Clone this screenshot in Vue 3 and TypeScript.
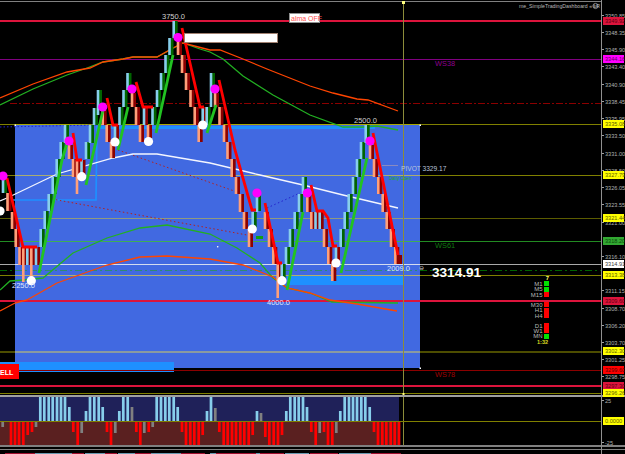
<script setup lang="ts">
type Bar = [number, number, number, string]

const W = 625
const H = 454
const BLOCK = { x: 15, y: 125, w: 405, h: 243 }

const hLines = [
  { y: 21, c: '#dc143c', w: 2, over: '#dc143c' },
  { y: 59.5, c: '#800080', w: 1, over: '#800080' },
  { y: 124.5, c: '#808000', w: 1, over: '#a8a800' },
  { y: 175.5, c: '#808000', w: 1, over: '#a9ad72' },
  { y: 218.5, c: '#5c5c00', w: 1.5, over: '#8f9a80' },
  { y: 241.5, c: '#228b22', w: 1, over: '#3fae55' },
  { y: 264.5, c: '#a9a9a9', w: 1, over: '#d4dcf0' },
  { y: 275.5, c: '#808000', w: 1, over: '#b0b070' },
  { y: 301, c: '#dc143c', w: 2, over: '#dc143c' },
  { y: 352, c: '#4d4d00', w: 2, over: '#8a9aa0' },
  { y: 370.5, c: '#8b0000', w: 1, over: '#8b0000' },
  { y: 386, c: '#dc143c', w: 2, over: '#dc143c' },
  { y: 393.5, c: '#808000', w: 1, over: '#808000' },
]

const bars: Bar[] = [
  [3, 178, 193, 'u'], [7.5, 193, 211, 'd'], [12, 212, 229, 'd'], [15.7, 229, 247, 'd'], [19.5, 247, 265, 'd'],
  [23.3, 247, 282, 'd'], [27.3, 247, 265, 'ur'], [31.3, 247, 282, 'd'], [36, 247, 265, 'ur'],
  [40.7, 229, 247, 'u'], [44.7, 211, 229, 'u'], [48.7, 194, 211, 'u'], [52.7, 177, 194, 'u'], [56.7, 159, 177, 'u'],
  [60.7, 142, 159, 'u'], [65, 125, 143, 'u'], [69, 145, 159, 'd'], [73, 159, 177, 'd'], [77, 160, 194, 'd'],
  [81.5, 160, 177, 'ur'], [86, 142, 159, 'u'], [90, 125, 143, 'u'], [94, 108, 125, 'u'], [98, 90, 115, 'u'],
  [102.7, 110, 125, 'd'], [106.7, 125, 142, 'd'], [111, 142, 158, 'd'], [115, 125, 140, 'ur'],
  [119.5, 107, 125, 'u'], [123.5, 90, 107, 'u'], [127.5, 73, 90, 'u'], [132, 93, 107, 'd'], [136, 107, 125, 'd'],
  [140, 125, 142, 'd'], [144, 107, 125, 'ur'], [148, 125, 142, 'd'], [152.5, 107, 125, 'u'], [157, 90, 107, 'u'],
  [161, 73, 90, 'u'], [165.5, 55, 73, 'u'], [169.5, 38, 55, 'u'], [173.7, 21, 38, 'u'], [178, 38, 55, 'd'],
  [182, 55, 73, 'd'], [186, 73, 90, 'd'], [190.5, 90, 107, 'd'], [194.7, 107, 125, 'd'], [198.7, 125, 142, 'd'],
  [202.7, 107, 125, 'ur'], [206.7, 107, 125, 'u'], [211, 73, 107, 'u'], [215, 93, 107, 'd'], [219.5, 107, 125, 'd'],
  [224, 125, 142, 'd'], [227.5, 142, 159, 'd'], [231.7, 159, 177, 'd'], [236, 177, 194, 'd'], [240, 194, 212, 'd'],
  [244, 212, 229, 'd'], [249, 229, 247, 'd'], [252.7, 212, 229, 'u'], [257, 193, 212, 'u'], [265, 212, 229, 'd'],
  [269, 229, 247, 'd'], [273.3, 247, 264, 'd'], [277.7, 264, 298, 'd'], [281.7, 264, 282, 'u'], [286, 247, 264, 'u'],
  [290, 229, 247, 'u'], [294.7, 212, 229, 'u'], [299, 194, 212, 'u'], [303, 177, 194, 'u'], [307.3, 195, 212, 'd'],
  [311.3, 212, 229, 'd'], [315.5, 212, 229, 'ur'], [319.7, 212, 229, 'ur'], [324, 229, 247, 'd'], [328.3, 247, 264, 'd'],
  [332.3, 264, 281, 'd'], [336, 247, 264, 'ur'], [340.7, 229, 247, 'u'], [344.7, 212, 229, 'u'], [348.7, 194, 212, 'u'],
  [353, 177, 194, 'u'], [357, 159, 177, 'u'], [361, 142, 159, 'u'], [365.7, 125, 143, 'u'], [370, 145, 159, 'd'],
  [374, 159, 177, 'd'], [378.3, 177, 194, 'd'], [382.7, 194, 212, 'd'], [386.7, 212, 229, 'd'], [391, 229, 247, 'd'],
  [395.3, 247, 264, 'd'],
]

function lightColor(k: string): string {
  return k === 'd' ? '#ffa07a' : '#87ceeb'
}
function darkColor(k: string): string {
  return k === 'u' ? '#006400' : '#8b0000'
}

const greenLegs = [
  '39,273 62,160 68,140', '86,185 103,110', '118,150 128,107', '156,133 173,55', '207,133 216,105',
  '287,290 303,212', '341,273 367,158',
]
const redLegs = [
  '7,178 23,247 37,247', '73,133 77,160 82,160', '107,98 113,125 118,125', '136,82 143,107 153,107',
  '182,28 200,107 204,107', '219,80 235,150 252,210 256,210', '265,203 278,263 282,263',
  '311,185 317,211 323,211 328,218 333,246 337,246', '373,133 398,255',
]

const curves = [
  { c: '#22b022', p: '0,105 33,89 67,75 87,68 103,62 123,59 133,57 157,57 170,50 183,43 200,49 210,52 223,59 243,76 273,95 310,115 343,127 363,127 377,126 398,130' },
  { c: '#ff4500', p: '0,98 33,84 67,72 90,68 103,62 123,59 133,57 157,57 173,48 183,43 210,50 220,50 243,59 267,69 310,86 333,93 357,99 368,100 398,111' },
  { c: '#f4f6ff', p: '0,201 7,198 57,174 113,158 133,154 157,154 210,163 260,175 303,185 343,195 398,208' },
  { c: '#22b022', p: '0,290 10,281 23,280 43,278 73,253 107,238 140,228 167,225 210,234 237,248 260,263 273,278 287,288 310,293 332,302 398,303' },
  { c: '#ff4500', p: '0,311 15,303 27,300 57,283 107,265 140,257 167,256 210,259 243,265 273,277 287,288 310,293 330,300 357,304 397,311' },
]

const magenta = [[3, 176], [69, 141], [102.7, 107], [132, 89], [178, 37.5], [215, 89], [257, 193], [307.3, 193], [370, 141]]
const whiteDots = [[0, 211], [31.3, 280.7], [81.7, 176.7], [115, 142], [148.5, 141.5], [202.7, 125], [252.3, 229], [282, 280.7], [336, 263]]

const chartLabels = [
  { t: '3750.0', x: 162, y: 19, c: '#d0d0d0' },
  { t: '2500.0', x: 354, y: 123, c: '#d0d0d0' },
  { t: '4000.0', x: 267, y: 305, c: '#dde6ff' },
  { t: '2250.0', x: 12, y: 288, c: '#dde6ff' },
  { t: '2009.0', x: 387, y: 271, c: '#dde6ff' },
]

const priceTicks: [string, number][] = [
  ['3350.85', 15], ['3348.35', 32], ['3345.90', 49], ['3343.40', 66], ['3340.90', 84], ['3338.45', 101],
  ['3335.95', 118], ['3333.50', 135], ['3331.00', 153], ['3328.50', 170], ['3326.05', 187], ['3323.55', 204],
  ['3321.00', 222], ['3316.10', 256], ['3311.15', 290], ['3308.70', 308], ['3306.20', 325], ['3303.70', 342],
  ['3301.25', 359], ['3298.75', 376], ['25', 400], ['-25', 442],
]
const priceTags: [string, number, string, string][] = [
  ['3349.92', 21, '#dc143c', '#5c0010'], ['3344.16', 59, '#ff00ff', '#600060'], ['3335.08', 124, '#ffff00', '#606000'],
  ['3327.79', 175, '#ffff00', '#606000'], ['3321.44', 218, '#ffff00', '#606000'], ['3318.20', 241, '#32a832', '#0a4a0a'],
  ['3314.91', 264, '#ffffff', '#404040'], ['3313.38', 275, '#ffff00', '#606000'], ['3309.60', 301, '#dc143c', '#5c0010'],
  ['3302.30', 351, '#ffff00', '#606000'], ['3299.60', 370, '#ff0000', '#600000'], ['3297.30', 386, '#dc143c', '#5c0010'],
  ['3296.26', 393, '#ffff00', '#606000'], ['0.0000', 421, '#ffff00', '#606000'],
]

const upHist: [number, number, string][] = [
  ...[40.3, 44.3, 48.7, 52.7, 57, 61, 65].map((x): [number, number, string] => [x, 397, '#87ceeb']),
  [69.3, 407, '#87ceeb'], [86, 411, '#87ceeb'],
  ...[90, 94.3, 98.7].map((x): [number, number, string] => [x, 397, '#87ceeb']),
  [102.7, 407, '#87ceeb'], [119.3, 411, '#87ceeb'], [123.3, 397, '#87ceeb'], [127.7, 397, '#87ceeb'], [132, 407, '#808080'],
  ...[156.7, 161, 165.3, 169.3, 173.7].map((x): [number, number, string] => [x, 397, '#87ceeb']),
  [177.7, 407, '#87ceeb'], [207, 411, '#87ceeb'], [211, 397, '#87ceeb'], [215.3, 408, '#808080'],
  [257, 411, '#87ceeb'], [261, 413, '#808080'], [286.3, 411, '#87ceeb'],
  ...[290.3, 294.7, 298.7, 303].map((x): [number, number, string] => [x, 397, '#87ceeb']),
  [307, 407, '#87ceeb'], [340.3, 411, '#87ceeb'],
  ...[344.7, 349, 353, 357, 361.3, 365.3].map((x): [number, number, string] => [x, 397, '#87ceeb']),
  [369.7, 407, '#87ceeb'],
]
const downHist: [number, number, string][] = [
  [2.7, 427, '#808080'],
  ...[11, 15, 19, 23.3].map((x): [number, number, string] => [x, 445.7, '#ff0000']),
  [27.7, 435, '#ff0000'], [32, 432, '#ff0000'], [36, 427, '#808080'], [73.3, 432, '#ff0000'], [77.7, 445.7, '#ff0000'],
  [81.7, 433, '#808080'], [107, 432, '#ff0000'], [111, 445.7, '#ff0000'], [115.3, 433, '#808080'], [136.3, 432, '#ff0000'],
  [140.3, 445.7, '#ff0000'], [144.3, 433, '#808080'], [148.7, 432, '#ff0000'], [152.7, 427, '#808080'], [182, 432, '#ff0000'],
  ...[186, 190.3, 194.3, 198.7].map((x): [number, number, string] => [x, 445.7, '#ff0000']),
  [202.7, 435, '#ff0000'], [219.3, 432, '#ff0000'],
  ...[223.7, 227.7, 232, 236, 240.3, 244.3, 248.7].map((x): [number, number, string] => [x, 445.7, '#ff0000']),
  [252.7, 435, '#ff0000'], [265.3, 437, '#ff0000'],
  ...[269.3, 273.7, 278].map((x): [number, number, string] => [x, 445.7, '#ff0000']),
  [282, 435, '#ff0000'], [311.3, 432, '#ff0000'], [315.7, 445.7, '#ff0000'], [319.7, 433, '#808080'], [324, 432, '#ff0000'],
  [328, 445.7, '#ff0000'], [332.3, 445.7, '#ff0000'], [336.3, 433, '#808080'], [374, 432, '#ff0000'],
  ...[378, 382.3, 386.3, 390.7, 394.7, 399].map((x): [number, number, string] => [x, 445.7, '#ff0000']),
]

const dash: { t: string; y: number; c: string }[] = [
  { t: 'M1', y: 281, c: '#00e000' }, { t: 'M5', y: 286.5, c: '#00e000' }, { t: 'M15', y: 292, c: '#ff0000' },
  { t: 'M30', y: 302, c: '#ff0000' }, { t: 'H1', y: 307.5, c: '#ff0000' }, { t: 'H4', y: 313, c: '#ff0000' },
  { t: 'D1', y: 323, c: '#ff0000' }, { t: 'W1', y: 328, c: '#ff0000' }, { t: 'MN', y: 333.5, c: '#00e000' },
]

const axisTicks = [
  [5, 30, '#a01030'], [35, 37, '#6a9ab0'], [72, 12, '#a01030'], [85, 20, '#6a9ab0'], [105, 12, '#a01030'],
  [118, 20, '#6a9ab0'], [135, 16, '#a01030'], [151, 30, '#6a9ab0'], [181, 24, '#a01030'], [210, 6, '#6a9ab0'],
  [216, 40, '#a01030'], [256, 4, '#6a9ab0'], [260, 24, '#a01030'], [285, 24, '#6a9ab0'], [310, 28, '#a01030'],
  [339, 32, '#6a9ab0'], [371, 30, '#a01030'],
]
</script>

<template>
  <div class="screen">
    <svg class="chart" :width="W" :height="H" :viewBox="`0 0 ${W} ${H}`">
      <!-- main price canvas -->
      <rect class="sharp" x="0" y="1" width="602" height="1" fill="#808080" />
      <rect class="sharp" :x="BLOCK.x" :y="BLOCK.y" :width="BLOCK.w" :height="BLOCK.h" fill="#4169e1" />
      <rect class="sharp" x="96" y="126" width="279" height="3" fill="#1e90ff" />
      <rect class="sharp" x="287" y="276" width="116" height="9" fill="#1e90ff" />
      <rect class="sharp" x="0" y="362" width="174" height="10" fill="#1e90ff" />

      <g v-for="l in hLines" :key="l.y">
        <line class="sharp" x1="0" :y1="l.y" x2="602" :y2="l.y" :stroke="l.c" :stroke-width="l.w" />
        <line class="sharp" :x1="BLOCK.x" :y1="l.y" :x2="BLOCK.x + BLOCK.w" :y2="l.y" :stroke="l.over" :stroke-width="l.w" />
      </g>
      <line class="sharp" x1="10" y1="103.5" x2="602" y2="103.5" stroke="#8b0000" stroke-dasharray="7 2 2 2" />
      <line class="sharp" x1="0" y1="270" x2="602" y2="270" stroke="#006400" stroke-dasharray="7 3 2 3" />
      <line class="sharp" x1="15" y1="270" x2="420" y2="270" stroke="#2f8a70" stroke-dasharray="7 3 2 3" />

      <!-- dotted trend guides and step line -->
      <polyline points="13,200 96,200 97,127" fill="none" stroke="#1e90ff" stroke-width="1.7" />
      <line x1="52" y1="199" x2="247" y2="235" stroke="#b22222" stroke-dasharray="1.5 2.5" />
      <line x1="118" y1="150" x2="237" y2="192" stroke="#b22222" stroke-dasharray="1.5 2.5" />
      <line x1="267" y1="208" x2="300" y2="193" stroke="#2222cc" stroke-dasharray="1.5 2.5" />
      <line x1="0" y1="127" x2="96" y2="125" stroke="#2222cc" stroke-dasharray="1.5 2" />

      <polyline v-for="(c, i) in curves" :key="i" :points="c.p" fill="none" :stroke="c.c" stroke-width="1.3" />

      <!-- renko bricks -->
      <rect v-for="(b, i) in bars" :key="'k' + i" :x="b[0] + 0.6" :y="b[1]" width="3.4" :height="Math.min(b[2] - b[1], 18)" :fill="darkColor(b[3])" />
      <rect v-for="(b, i) in bars" :key="'b' + i" :x="b[0] - 1.3" :y="b[1]" width="2.6" :height="b[2] - b[1]" :fill="lightColor(b[3])" />
      <rect class="sharp" x="398" y="255" width="4" height="9" fill="#8b0000" />
      <rect class="sharp" x="256" y="236" width="7" height="2.5" fill="#12a012" />

      <polyline v-for="(p, i) in greenLegs" :key="'g' + i" :points="p" fill="none" stroke="#22c322" stroke-width="2.8" />
      <polyline v-for="(p, i) in redLegs" :key="'r' + i" :points="p" fill="none" stroke="#ff0000" stroke-width="2.8" />

      <circle v-for="(d, i) in magenta" :key="'m' + i" :cx="d[0]" :cy="d[1]" r="4.6" fill="#ff00ff" />
      <circle v-for="(d, i) in whiteDots" :key="'w' + i" :cx="d[0]" :cy="d[1]" r="4.6" fill="#ffffff" />
      <circle cx="217.7" cy="246.7" r="0.8" fill="#ffffff" />
      <rect x="14.5" y="124.5" width="1.5" height="1.5" fill="#ffffff" />
      <rect x="419.5" y="124.5" width="1.5" height="1.5" fill="#ffffff" />
      <rect x="419.5" y="367.5" width="1.5" height="1.5" fill="#ffffff" />

      <!-- cursor line -->
      <line class="sharp" x1="403.5" y1="2" x2="403.5" y2="446" stroke="#8c8c3a" />
      <rect x="402" y="1" width="3" height="3" fill="#ffff80" />
      <rect x="402.5" y="393" width="2" height="2" fill="#ffff80" />

      <!-- objects -->
      <rect class="sharp" x="184.5" y="33.5" width="93" height="9" fill="#ffffff" stroke="#a08070" />
      <rect class="sharp" x="289.5" y="13" width="30" height="9" fill="#ffffff" stroke="#909090" />
      <text x="291" y="20.5" class="f6" fill="#ff5050" font-size="7">alma OFF</text>
      <rect class="sharp" x="0" y="364" width="19" height="15" fill="#ff0000" />
      <text x="0" y="374.5" class="f6 bold" fill="#ffffff" font-size="7">ELL</text>

      <text v-for="l in chartLabels" :key="l.t" :x="l.x" :y="l.y" class="f6" :fill="l.c" font-size="7.5">{{ l.t }}</text>
      <text x="401" y="171" class="f6" fill="#b8c4dc" font-size="6.6">PIVOT 3329.17</text>
      <text x="389" y="180" class="f6" fill="#22b022" font-size="4.6">Daily Open</text>
      <line class="sharp" x1="382" y1="165.5" x2="398" y2="165.5" stroke="#8a8ac0" />
      <text x="435" y="66" class="f6" fill="#8f008f" font-size="7.4">WS38</text>
      <text x="435" y="248" class="f6" fill="#117a11" font-size="7.4">WS61</text>
      <text x="435" y="377" class="f6" fill="#a00000" font-size="7.4">WS78</text>
      <text x="432" y="277" class="bold f6" fill="#ffffff" font-size="13.6">3314.91</text>
      <text x="419" y="270" class="f6" fill="#d0d0d0" font-size="6">⊖</text>

      <text x="519" y="8" class="f6" fill="#b8b8b8" font-size="5.2">me_SimpleTradingDashboard « LR</text>
      <circle cx="595.5" cy="6" r="2.6" fill="none" stroke="#b0b0b0" stroke-width="0.7" />
      <line x1="593" y1="6" x2="598" y2="6" stroke="#b0b0b0" stroke-width="0.7" />

      <!-- indicator pane -->
      <rect class="sharp" x="0" y="395" width="625" height="2" fill="#a0a0a0" />
      <rect class="sharp" x="0" y="397" width="399" height="24" fill="#1f2159" />
      <rect class="sharp" x="0" y="422" width="399" height="24" fill="#5a2020" />
      <line class="sharp" x1="0" y1="421.5" x2="602" y2="421.5" stroke="#808000" />
      <rect v-for="(b, i) in upHist" :key="'u' + i" :x="b[0] - 1.35" :y="b[1]" width="2.7" :height="421 - b[1]" :fill="b[2]" />
      <rect v-for="(b, i) in downHist" :key="'d' + i" :x="b[0] - 1.35" y="422" width="2.7" :height="b[1] - 422" :fill="b[2]" />
      <rect class="sharp" x="0" y="445" width="625" height="2" fill="#808080" />
      <rect class="sharp" x="0" y="449" width="625" height="1" fill="#808080" />
      <rect v-for="(t, i) in axisTicks" :key="'x' + i" class="sharp" :x="t[0] as number" y="453" :width="t[1] as number" height="1" :fill="t[2] as string" />

      <!-- dashboard signals -->
      <text x="547.5" y="280" class="f6 bold" fill="#ffff66" font-size="6" text-anchor="middle">7</text>
      <g v-for="d in dash" :key="d.t">
        <text x="542.5" :y="d.y + 4.8" class="f6" fill="#b8b8b8" font-size="6" text-anchor="end">{{ d.t }}</text>
        <rect class="sharp" x="544" :y="d.y" width="5" height="5" :fill="d.c" />
      </g>
      <text x="537" y="344" class="f6 bold" fill="#d8d820" font-size="5.6">1:32</text>

      <!-- price axis -->
      <rect class="sharp" x="601" y="0" width="1" :height="H" fill="#909090" />
      <g v-for="p in priceTicks" :key="p[0]">
        <rect class="sharp" x="602" :y="p[1]" width="2" height="1" fill="#a0a0a0" />
        <text x="605" :y="p[1] + 2.5" class="f6" fill="#b0b0b0" font-size="5.6">{{ p[0] }}</text>
      </g>
      <g v-for="p in priceTags" :key="p[0]">
        <rect class="sharp" x="603" :y="p[1] - 4" width="21" height="8" :fill="p[2]" />
        <text x="605" :y="p[1] + 2" class="f6" :fill="p[3]" font-size="5.6">{{ p[0] }}</text>
      </g>
    </svg>
  </div>
</template>

<style scoped>
.screen {
  width: 625px;
  height: 454px;
  background: #000000;
  overflow: hidden;
}
.chart {
  display: block;
}
.sharp {
  shape-rendering: crispEdges;
}
.f6 {
  font-family: "Liberation Sans", Arial, sans-serif;
}
.bold {
  font-weight: 700;
}
</style>
